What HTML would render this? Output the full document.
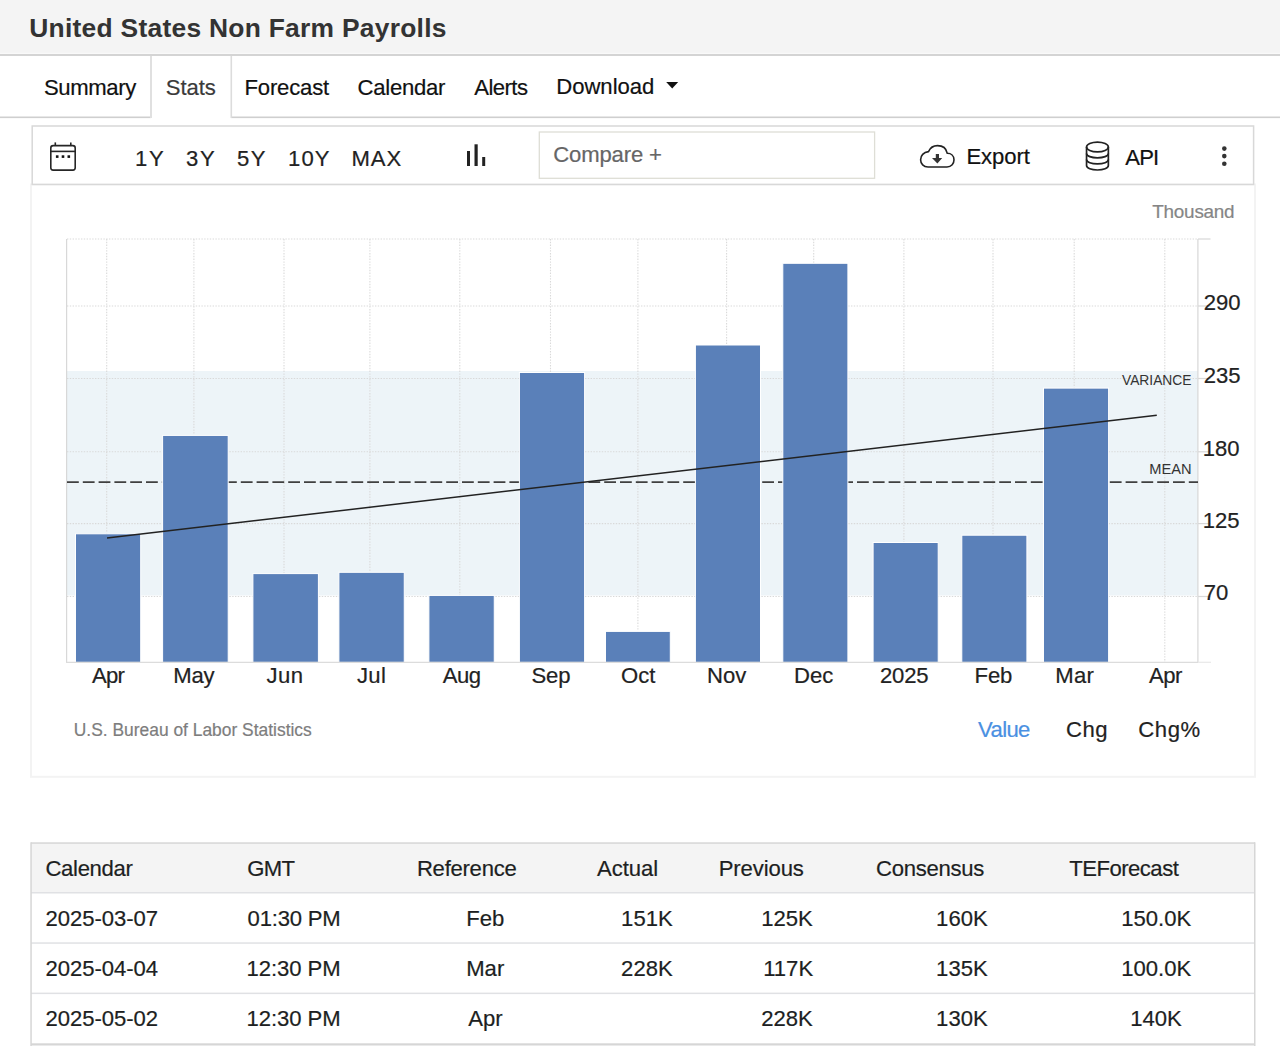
<!DOCTYPE html>
<html><head><meta charset="utf-8"><title>United States Non Farm Payrolls</title>
<style>
html,body{margin:0;padding:0;background:#fff;width:1280px;height:1046px;overflow:hidden;}
svg{display:block;font-family:"Liberation Sans", sans-serif;}
</style></head><body>
<svg width="1280" height="1046" viewBox="0 0 1280 1046">
<rect x="0" y="0" width="1280" height="54" fill="#f4f4f4"/>
<rect x="0" y="52.8" width="1280" height="1.2" fill="#f9f9f9"/>
<rect x="0" y="54" width="1280" height="2" fill="#d4d4d4"/>
<rect x="0" y="116.5" width="151" height="1.6" fill="#cfcfcf"/>
<rect x="231" y="116.5" width="1049" height="1.6" fill="#cfcfcf"/>
<rect x="150" y="56" width="2" height="62" fill="#e0e0e0"/>
<rect x="230.5" y="56" width="1.6" height="62" fill="#dcdcdc"/>
<path d="M666.2 82 L678.2 82 L672.2 88.6 Z" fill="#111"/>
<rect x="31" y="184.5" width="1224" height="592.3" fill="none" stroke="#f3f3f3" stroke-width="2"/>
<rect x="32.2" y="126" width="1221.4" height="58.4" fill="#fff" stroke="#d8d8d8" stroke-width="1.5"/>
<g fill="none" stroke="#262626" stroke-width="1.6"><rect x="50.8" y="145.6" width="24.4" height="24.5" rx="2.3"/><line x1="50.8" y1="151.4" x2="75.2" y2="151.4"/><line x1="55.3" y1="142.4" x2="55.3" y2="146"/><line x1="70.8" y1="142.4" x2="70.8" y2="146"/></g>
<g fill="#111"><rect x="55.9" y="155.3" width="2.6" height="2.6"/><rect x="61.7" y="155.3" width="2.6" height="2.6"/><rect x="67.5" y="155.3" width="2.6" height="2.6"/></g>
<g fill="#222"><rect x="467" y="151" width="3" height="15"/><rect x="474.5" y="144.3" width="3.2" height="21.7"/><rect x="482.2" y="157" width="3" height="9"/></g>
<rect x="539.3" y="132" width="335.3" height="46.3" fill="#fff" stroke="#deded6" stroke-width="1.3"/>
<path d="M928 167 L947 167 C951.5 167 954 163.5 954 159.8 C954 155.8 951 153.3 947.3 153.3 C946.3 148.3 942.5 145.6 937.5 145.6 C933 145.6 930 148.2 928.5 151.6 C923.5 152.1 920.6 155.7 920.6 159.7 C920.6 163.7 923.6 167 928 167 Z" fill="none" stroke="#222" stroke-width="1.6"/>
<path d="M935.8 154 L939 154 L939 158 L942.2 158 L937.4 163.4 L932 158 L935.8 158 Z" fill="#333"/>
<g fill="none" stroke="#222" stroke-width="1.7"><ellipse cx="1097.45" cy="147" rx="10.9" ry="4.9"/><path d="M1086.55 147 L1086.55 165.6 C1086.55 168.3 1091.5 170 1097.45 170 C1103.4 170 1108.35 168.3 1108.35 165.6 L1108.35 147"/><path d="M1086.55 153.4 C1086.55 156.1 1091.5 157.8 1097.45 157.8 C1103.4 157.8 1108.35 156.1 1108.35 153.4"/><path d="M1086.55 159.5 C1086.55 162.2 1091.5 163.9 1097.45 163.9 C1103.4 163.9 1108.35 162.2 1108.35 159.5"/></g>
<g fill="#333"><circle cx="1224.3" cy="148.6" r="2.3"/><circle cx="1224.3" cy="156.1" r="2.3"/><circle cx="1224.3" cy="163.8" r="2.3"/></g>
<rect x="67" y="371" width="1131" height="224.5" fill="#edf4f8"/>
<g stroke="#d9d9d9" stroke-width="1.1" stroke-dasharray="1.4 1.4" fill="none">
<line x1="67" y1="239" x2="1198" y2="239"/>
<line x1="67" y1="306" x2="1198" y2="306"/>
<line x1="67" y1="378.5" x2="1198" y2="378.5"/>
<line x1="67" y1="451.8" x2="1198" y2="451.8"/>
<line x1="67" y1="523.6" x2="1198" y2="523.6"/>
<line x1="67" y1="596.5" x2="1198" y2="596.5"/>
<line x1="106.7" y1="239" x2="106.7" y2="662"/>
<line x1="193.9" y1="239" x2="193.9" y2="662"/>
<line x1="284" y1="239" x2="284" y2="662"/>
<line x1="369.9" y1="239" x2="369.9" y2="662"/>
<line x1="459.8" y1="239" x2="459.8" y2="662"/>
<line x1="550.5" y1="239" x2="550.5" y2="662"/>
<line x1="637.9" y1="239" x2="637.9" y2="662"/>
<line x1="726.6" y1="239" x2="726.6" y2="662"/>
<line x1="813.7" y1="239" x2="813.7" y2="662"/>
<line x1="903.9" y1="239" x2="903.9" y2="662"/>
<line x1="993" y1="239" x2="993" y2="662"/>
<line x1="1074.2" y1="239" x2="1074.2" y2="662"/>
<line x1="1164.8" y1="239" x2="1164.8" y2="662"/>
</g>
<g stroke="#d8d8d8" stroke-width="1.2" fill="none">
<line x1="66.6" y1="239" x2="66.6" y2="662"/>
<line x1="1197.9" y1="239" x2="1197.9" y2="662"/>
<line x1="1198" y1="239" x2="1210.5" y2="239"/>
<line x1="1198" y1="306" x2="1210.5" y2="306"/>
<line x1="1198" y1="378.5" x2="1210.5" y2="378.5"/>
<line x1="1198" y1="451.8" x2="1210.5" y2="451.8"/>
<line x1="1198" y1="523.6" x2="1210.5" y2="523.6"/>
<line x1="1198" y1="596.5" x2="1210.5" y2="596.5"/>
</g>
<line x1="67" y1="482.1" x2="1198" y2="482.1" stroke="#404040" stroke-width="1.8" stroke-dasharray="11.8 4"/>
<g fill="#5a80b9" stroke="#fff" stroke-width="1">
<rect x="75.5" y="533.8" width="65.19999999999999" height="128.60000000000002"/>
<rect x="162.6" y="435.4" width="65.6" height="227.0"/>
<rect x="252.9" y="573.6" width="65.49999999999997" height="88.79999999999995"/>
<rect x="338.9" y="572.3" width="65.35000000000002" height="90.10000000000002"/>
<rect x="428.9" y="595.4" width="65.35000000000002" height="67.0"/>
<rect x="519.4" y="372.5" width="65.20000000000005" height="289.9"/>
<rect x="605.5" y="631.4" width="64.79999999999995" height="31.0"/>
<rect x="695.4" y="345.0" width="65.10000000000002" height="317.4"/>
<rect x="782.8" y="263.3" width="65.10000000000002" height="399.09999999999997"/>
<rect x="873.1" y="542.5" width="65.10000000000002" height="119.89999999999998"/>
<rect x="961.8" y="535.2" width="65.10000000000014" height="127.19999999999993"/>
<rect x="1043.5" y="388.1" width="65.09999999999991" height="274.29999999999995"/>
</g>
<line x1="66" y1="662.3" x2="1198" y2="662.3" stroke="#dcdcdc" stroke-width="1.2"/>
<line x1="1198" y1="662.3" x2="1211" y2="662.3" stroke="#e8e8e8" stroke-width="1.2"/>
<line x1="107" y1="538" x2="1156.8" y2="415.2" stroke="#222" stroke-width="1.5"/>
<rect x="31" y="843" width="1224" height="49.5" fill="#f4f4f4"/>
<g fill="#e0e1e4">
<rect x="31" y="892" width="1224" height="1.5"/>
<rect x="31" y="942.3" width="1224" height="1.5"/>
<rect x="31" y="992.6" width="1224" height="1.5"/>
</g>
<g fill="#d6d6d6">
<rect x="31" y="842.3" width="1224" height="1.5"/>
<rect x="31" y="1043.3" width="1224" height="2.2"/>
<rect x="30.3" y="842.3" width="1.5" height="210"/>
<rect x="1254" y="842.3" width="1.5" height="210"/>
</g>
<text x="29.25" y="36.9" font-size="26.4" font-weight="bold" fill="#333" textLength="417.22" lengthAdjust="spacing">United States Non Farm Payrolls</text>
<text x="43.90" y="94.5" font-size="22.1" fill="#111" stroke="#111" stroke-width="0.2" textLength="92.38" lengthAdjust="spacing">Summary</text>
<text x="165.75" y="94.5" font-size="22.1" fill="#3a3a3a" stroke="#3a3a3a" stroke-width="0.2" textLength="50.11" lengthAdjust="spacing">Stats</text>
<text x="244.50" y="94.5" font-size="22.1" fill="#111" stroke="#111" stroke-width="0.2" textLength="84.65" lengthAdjust="spacing">Forecast</text>
<text x="357.50" y="94.5" font-size="22.1" fill="#111" stroke="#111" stroke-width="0.2" textLength="87.97" lengthAdjust="spacing">Calendar</text>
<text x="474.20" y="94.5" font-size="22.1" fill="#111" stroke="#111" stroke-width="0.2" textLength="53.78" lengthAdjust="spacing">Alerts</text>
<text x="556.20" y="94.3" font-size="22.1" fill="#111" stroke="#111" stroke-width="0.2" textLength="98.17" lengthAdjust="spacing">Download</text>
<text x="135.10" y="166" font-size="22.1" fill="#222" stroke="#222" stroke-width="0.2" textLength="28.73" lengthAdjust="spacing">1Y</text>
<text x="186.10" y="166" font-size="22.1" fill="#222" stroke="#222" stroke-width="0.2" textLength="28.63" lengthAdjust="spacing">3Y</text>
<text x="237.10" y="166" font-size="22.1" fill="#222" stroke="#222" stroke-width="0.2" textLength="28.33" lengthAdjust="spacing">5Y</text>
<text x="288.10" y="166" font-size="22.1" fill="#222" stroke="#222" stroke-width="0.2" textLength="41.31" lengthAdjust="spacing">10Y</text>
<text x="351.50" y="166" font-size="22.1" fill="#222" stroke="#222" stroke-width="0.2" textLength="49.69" lengthAdjust="spacing">MAX</text>
<text x="553.30" y="162.4" font-size="22.1" fill="#666" stroke="#666" stroke-width="0.2" textLength="108.62" lengthAdjust="spacing">Compare +</text>
<text x="966.40" y="164.4" font-size="22.1" fill="#111" stroke="#111" stroke-width="0.2" textLength="63.46" lengthAdjust="spacing">Export</text>
<text x="1125.30" y="164.5" font-size="22.1" fill="#111" stroke="#111" stroke-width="0.2" textLength="33.83" lengthAdjust="spacing">API</text>
<text x="1152.30" y="217.5" font-size="18.9" fill="#858585" stroke="#858585" stroke-width="0.2" textLength="82.33" lengthAdjust="spacing">Thousand</text>
<text x="1203.80" y="310" font-size="22.1" fill="#222" stroke="#222" stroke-width="0.2">290</text>
<text x="1203.80" y="382.7" font-size="22.1" fill="#222" stroke="#222" stroke-width="0.2">235</text>
<text x="1202.80" y="455.7" font-size="22.1" fill="#222" stroke="#222" stroke-width="0.2">180</text>
<text x="1202.80" y="527.5" font-size="22.1" fill="#222" stroke="#222" stroke-width="0.2">125</text>
<text x="1203.80" y="599.7" font-size="22.1" fill="#222" stroke="#222" stroke-width="0.2">70</text>
<text x="1122.00" y="384.5" font-size="15.2" fill="#333" textLength="69.47" lengthAdjust="spacingAndGlyphs">VARIANCE</text>
<text x="1149.34" y="474.3" font-size="15.2" fill="#333" textLength="42.32" lengthAdjust="spacingAndGlyphs">MEAN</text>
<text x="92.10" y="683" font-size="22.1" fill="#222" stroke="#222" stroke-width="0.2" textLength="32.79" lengthAdjust="spacing">Apr</text>
<text x="173.30" y="683" font-size="22.1" fill="#222" stroke="#222" stroke-width="0.2" textLength="41.25" lengthAdjust="spacing">May</text>
<text x="266.50" y="683" font-size="22.1" fill="#222" stroke="#222" stroke-width="0.2" textLength="36.43" lengthAdjust="spacing">Jun</text>
<text x="356.90" y="683" font-size="22.1" fill="#222" stroke="#222" stroke-width="0.2" textLength="29.05" lengthAdjust="spacing">Jul</text>
<text x="442.70" y="683" font-size="22.1" fill="#222" stroke="#222" stroke-width="0.2" textLength="38.41" lengthAdjust="spacing">Aug</text>
<text x="531.40" y="683" font-size="22.1" fill="#222" stroke="#222" stroke-width="0.2" textLength="39.21" lengthAdjust="spacing">Sep</text>
<text x="621.00" y="683" font-size="22.1" fill="#222" stroke="#222" stroke-width="0.2" textLength="34.27" lengthAdjust="spacing">Oct</text>
<text x="707.10" y="683" font-size="22.1" fill="#222" stroke="#222" stroke-width="0.2" textLength="39.30" lengthAdjust="spacing">Nov</text>
<text x="794.10" y="683" font-size="22.1" fill="#222" stroke="#222" stroke-width="0.2" textLength="39.20" lengthAdjust="spacing">Dec</text>
<text x="879.90" y="683" font-size="22.1" fill="#222" stroke="#222" stroke-width="0.2" textLength="48.66" lengthAdjust="spacing">2025</text>
<text x="974.60" y="683" font-size="22.1" fill="#222" stroke="#222" stroke-width="0.2" textLength="37.78" lengthAdjust="spacing">Feb</text>
<text x="1055.30" y="683" font-size="22.1" fill="#222" stroke="#222" stroke-width="0.2" textLength="38.51" lengthAdjust="spacing">Mar</text>
<text x="1149.00" y="683" font-size="22.1" fill="#222" stroke="#222" stroke-width="0.2" textLength="33.29" lengthAdjust="spacing">Apr</text>
<text x="73.77" y="735.6" font-size="18.7" fill="#7d7d7d" stroke="#7d7d7d" stroke-width="0.2" textLength="237.98" lengthAdjust="spacingAndGlyphs">U.S. Bureau of Labor Statistics</text>
<text x="978.00" y="737" font-size="22.1" fill="#4a90e2" stroke="#4a90e2" stroke-width="0.2" textLength="52.38" lengthAdjust="spacing">Value</text>
<text x="1066.00" y="737" font-size="22.1" fill="#222" stroke="#222" stroke-width="0.2" textLength="41.53" lengthAdjust="spacing">Chg</text>
<text x="1138.20" y="737" font-size="22.1" fill="#222" stroke="#222" stroke-width="0.2" textLength="61.99" lengthAdjust="spacing">Chg%</text>
<text x="45.50" y="876.2" font-size="22.1" fill="#1d1f22" stroke="#1d1f22" stroke-width="0.2" textLength="87.27" lengthAdjust="spacing">Calendar</text>
<text x="247.20" y="876.2" font-size="22.1" fill="#1d1f22" stroke="#1d1f22" stroke-width="0.2" textLength="47.69" lengthAdjust="spacing">GMT</text>
<text x="416.90" y="876.2" font-size="22.1" fill="#1d1f22" stroke="#1d1f22" stroke-width="0.2" textLength="99.84" lengthAdjust="spacing">Reference</text>
<text x="597.00" y="876.2" font-size="22.1" fill="#1d1f22" stroke="#1d1f22" stroke-width="0.2" textLength="61.21" lengthAdjust="spacing">Actual</text>
<text x="718.70" y="876.2" font-size="22.1" fill="#1d1f22" stroke="#1d1f22" stroke-width="0.2" textLength="85.17" lengthAdjust="spacing">Previous</text>
<text x="876.10" y="876.2" font-size="22.1" fill="#1d1f22" stroke="#1d1f22" stroke-width="0.2" textLength="108.15" lengthAdjust="spacing">Consensus</text>
<text x="1069.30" y="876.2" font-size="22.1" fill="#1d1f22" stroke="#1d1f22" stroke-width="0.2" textLength="109.49" lengthAdjust="spacing">TEForecast</text>
<text x="45.50" y="925.6" font-size="22.1" fill="#1d1f22" stroke="#1d1f22" stroke-width="0.2" textLength="112.52" lengthAdjust="spacing">2025-03-07</text>
<text x="247.60" y="925.6" font-size="22.1" fill="#1d1f22" stroke="#1d1f22" stroke-width="0.2" textLength="92.98" lengthAdjust="spacing">01:30 PM</text>
<text x="466.20" y="925.6" font-size="22.1" fill="#1d1f22" stroke="#1d1f22" stroke-width="0.2">Feb</text>
<text x="621.10" y="925.6" font-size="22.1" fill="#1d1f22" stroke="#1d1f22" stroke-width="0.2">151K</text>
<text x="761.20" y="925.6" font-size="22.1" fill="#1d1f22" stroke="#1d1f22" stroke-width="0.2">125K</text>
<text x="936.10" y="925.6" font-size="22.1" fill="#1d1f22" stroke="#1d1f22" stroke-width="0.2">160K</text>
<text x="1121.20" y="925.6" font-size="22.1" fill="#1d1f22" stroke="#1d1f22" stroke-width="0.2">150.0K</text>
<text x="45.50" y="975.6" font-size="22.1" fill="#1d1f22" stroke="#1d1f22" stroke-width="0.2" textLength="112.52" lengthAdjust="spacing">2025-04-04</text>
<text x="246.60" y="975.6" font-size="22.1" fill="#1d1f22" stroke="#1d1f22" stroke-width="0.2" textLength="93.98" lengthAdjust="spacing">12:30 PM</text>
<text x="466.20" y="975.6" font-size="22.1" fill="#1d1f22" stroke="#1d1f22" stroke-width="0.2">Mar</text>
<text x="621.10" y="975.6" font-size="22.1" fill="#1d1f22" stroke="#1d1f22" stroke-width="0.2">228K</text>
<text x="763.20" y="975.6" font-size="22.1" fill="#1d1f22" stroke="#1d1f22" stroke-width="0.2">117K</text>
<text x="936.10" y="975.6" font-size="22.1" fill="#1d1f22" stroke="#1d1f22" stroke-width="0.2">135K</text>
<text x="1121.20" y="975.6" font-size="22.1" fill="#1d1f22" stroke="#1d1f22" stroke-width="0.2">100.0K</text>
<text x="45.50" y="1025.6" font-size="22.1" fill="#1d1f22" stroke="#1d1f22" stroke-width="0.2" textLength="112.52" lengthAdjust="spacing">2025-05-02</text>
<text x="246.60" y="1025.6" font-size="22.1" fill="#1d1f22" stroke="#1d1f22" stroke-width="0.2" textLength="93.98" lengthAdjust="spacing">12:30 PM</text>
<text x="468.20" y="1025.6" font-size="22.1" fill="#1d1f22" stroke="#1d1f22" stroke-width="0.2">Apr</text>
<text x="761.20" y="1025.6" font-size="22.1" fill="#1d1f22" stroke="#1d1f22" stroke-width="0.2">228K</text>
<text x="936.10" y="1025.6" font-size="22.1" fill="#1d1f22" stroke="#1d1f22" stroke-width="0.2">130K</text>
<text x="1130.20" y="1025.6" font-size="22.1" fill="#1d1f22" stroke="#1d1f22" stroke-width="0.2">140K</text>
</svg></body></html>
